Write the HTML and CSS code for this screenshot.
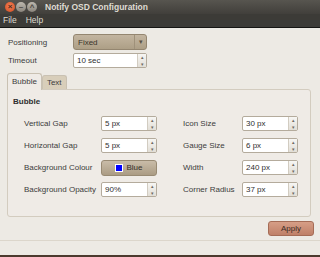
FILE: index.html
```html
<!DOCTYPE html>
<html lang="en">

<head>
    <meta charset="UTF-8">
    <title>Notify OSD Configuration</title>
    <link rel="stylesheet" href="styles.css">
</head>

<body>
    <div class="window">
        <div class="titlebar">
            <div class="wm-buttons">
                <span class="wm-btn close">&#215;</span>
                <span class="wm-btn">&#8211;</span>
                <span class="wm-btn">&#708;</span>
            </div>
            <div class="title">Notify OSD Configuration</div>
        </div>
        <div class="menubar">
            <span>File</span>
            <span>Help</span>
        </div>

        <div class="content">
            <div class="top-form">
                <label>Positioning</label>
                <div class="combo"><span>Fixed</span><span class="combo-arrow">&#9662;</span></div>
                <label>Timeout</label>
                <div class="spin wide"><span class="spin-value">10 sec</span><span class="spin-btns"><i>&#9652;</i><i>&#9662;</i></span></div>
            </div>

            <div class="notebook">
                <div class="tabs">
                    <div class="tab active">Bubble</div>
                    <div class="tab">Text</div>
                </div>
                <div class="panel">
                    <div class="panel-title">Bubble</div>
                    <div class="grid">
                        <label>Vertical Gap</label>
                        <div class="spin"><span class="spin-value">5 px</span><span class="spin-btns"><i>&#9652;</i><i>&#9662;</i></span></div>
                        <label class="right">Icon Size</label>
                        <div class="spin"><span class="spin-value">30 px</span><span class="spin-btns"><i>&#9652;</i><i>&#9662;</i></span></div>

                        <label>Horizontal Gap</label>
                        <div class="spin"><span class="spin-value">5 px</span><span class="spin-btns"><i>&#9652;</i><i>&#9662;</i></span></div>
                        <label class="right">Gauge Size</label>
                        <div class="spin"><span class="spin-value">6 px</span><span class="spin-btns"><i>&#9652;</i><i>&#9662;</i></span></div>

                        <label>Background Colour</label>
                        <div class="color-btn"><span class="swatch"></span>Blue</div>
                        <label class="right">Width</label>
                        <div class="spin"><span class="spin-value">240 px</span><span class="spin-btns"><i>&#9652;</i><i>&#9662;</i></span></div>

                        <label>Background Opacity</label>
                        <div class="spin"><span class="spin-value">90%</span><span class="spin-btns"><i>&#9652;</i><i>&#9662;</i></span></div>
                        <label class="right">Corner Radius</label>
                        <div class="spin"><span class="spin-value">37 px</span><span class="spin-btns"><i>&#9652;</i><i>&#9662;</i></span></div>
                    </div>
                </div>
            </div>

            <div class="actions">
                <button class="apply">Apply</button>
            </div>
        </div>
        <div class="footer"></div>
    </div>
</body>

</html>
```

FILE: styles.css
```css
body {
    margin: 0;
    font-family: "Liberation Sans", Arial, sans-serif;
    font-size: 8px;
    color: #3c3c3c;
    background: #edeae4;
}

.window {
    width: 320px;
    height: 257px;
    display: flex;
    flex-direction: column;
    background: #edeae4;
    overflow: hidden;
}

.titlebar {
    height: 14px;
    display: flex;
    align-items: center;
    background: linear-gradient(#57554f, #413f3b);
    color: #dfdbd2;
}

.wm-buttons {
    display: flex;
    gap: 1px;
    padding-left: 5px;
    width: 40px;
}

.wm-btn {
    width: 10px;
    height: 10px;
    border-radius: 50%;
    background: linear-gradient(#bdb8ae, #8a857c);
    color: #4a4741;
    font-size: 8px;
    font-weight: bold;
    line-height: 10px;
    text-align: center;
}

.wm-btn.close {
    background: radial-gradient(circle at 50% 40%, #f38157, #d04a1f);
    color: #4a2a1a;
}

.title {
    font-weight: bold;
    font-size: 8.5px;
    padding-left: 0;
}

.menubar {
    height: 12px;
    display: flex;
    gap: 9px;
    align-items: flex-start;
    padding-left: 3px;
    padding-top: 1px;
    background: #3c3b37;
    color: #dfdbd2;
    border-bottom: 1px solid #151513;
    font-size: 8.5px;
}

.content {
    flex: 1;
    padding: 6px 7px 0 8px;
    display: flex;
    flex-direction: column;
}

.top-form {
    display: grid;
    grid-template-columns: 65px 74px;
    row-gap: 3px;
    align-items: center;
}

.combo {
    height: 14px;
    display: flex;
    align-items: center;
    justify-content: space-between;
    padding-left: 4px;
    border: 1px solid #948670;
    border-radius: 3px;
    background: linear-gradient(#c3b5a0, #ad9f86);
    color: #3a342b;
}

.combo-arrow {
    width: 11px;
    height: 14px;
    line-height: 14px;
    text-align: center;
    font-size: 7px;
    color: #5a5246;
    border-left: 1px solid #9f917a;
}

.spin {
    width: 54px;
    height: 13px;
    display: flex;
    border: 1px solid #b4ab9c;
    border-radius: 2px;
    background: #fff;
    color: #2f2f2f;
}

.spin.wide {
    width: 72px;
}

.spin-value {
    flex: 1;
    padding-left: 3px;
    line-height: 13px;
}

.spin-btns {
    width: 8px;
    display: flex;
    flex-direction: column;
    border-left: 1px solid #d2ccc1;
    background: linear-gradient(#f7f6f3, #e2ded6);
}

.spin-btns i {
    flex: 1;
    font-style: normal;
    font-size: 5px;
    line-height: 6px;
    text-align: center;
    color: #6e6a63;
}

.notebook {
    margin-top: 4px;
    margin-left: -1px;
}

.tabs {
    display: flex;
    align-items: flex-end;
    height: 17px;
    padding-left: 0;
}

.tab {
    height: 13px;
    padding: 0 4px;
    line-height: 13px;
    border: 1px solid #c9c1b2;
    border-bottom: none;
    border-radius: 3px 3px 0 0;
    background: #d8ceba;
    color: #3c3c3c;
}

.tab.active {
    height: 16px;
    line-height: 16px;
    background: #efebe6;
    position: relative;
    top: 1px;
}

.panel {
    height: 128px;
    box-sizing: border-box;
    width: 304px;
    border: 1px solid #d3ccbf;
    border-radius: 0 3px 3px 3px;
    background: #efebe6;
    padding: 7px 0 0 5px;
}

.panel-title {
    font-weight: bold;
    color: #2e2e2e;
    height: 12px;
}

.grid {
    display: grid;
    grid-template-columns: 77px 56px 26px 59px 56px;
    grid-auto-rows: 15px;
    row-gap: 7px;
    margin-top: 7px;
    margin-left: 11px;
    align-items: center;
}

.grid .right {
    grid-column: 4;
}

.color-btn {
    width: 54px;
    height: 14px;
    display: flex;
    align-items: center;
    justify-content: center;
    gap: 3px;
    border: 1px solid #988a73;
    border-radius: 3px;
    background: linear-gradient(#c9bca8, #ab9c84);
    color: #35302a;
}

.swatch {
    width: 6px;
    height: 6px;
    background: #0000ff;
    border: 1px solid #fff;
}

.actions {
    display: flex;
    justify-content: flex-end;
    padding-top: 4px;
    margin-right: -1px;
}

.apply {
    width: 46px;
    height: 15px;
    padding: 0;
    font-family: inherit;
    font-size: 8px;
    color: #3b2c25;
    border: 1px solid #a56c56;
    border-radius: 3px;
    background: linear-gradient(#d69e86, #bf8068);
}

.footer {
    height: 14px;
    border-top: 1px solid #dcd6cb;
    border-bottom: 2px solid #4c3a2e;
}
```
